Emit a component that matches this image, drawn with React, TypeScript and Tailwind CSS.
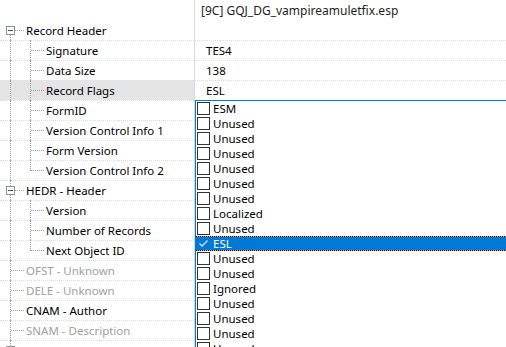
import React from "react";

type Row = {
  label?: string;
  value?: string;
  level: 0 | 1 | 2;
  gray?: boolean;
  expander?: boolean;
  first?: boolean;
  lastChild?: boolean;
  highlight?: boolean;
};

const rows: Row[] = [
  { level: 0 },
  { label: "Record Header", level: 1, expander: true, first: true },
  { label: "Signature", value: "TES4", level: 2 },
  { label: "Data Size", value: "138", level: 2 },
  { label: "Record Flags", value: "ESL", level: 2, highlight: true },
  { label: "FormID", level: 2 },
  { label: "Version Control Info 1", level: 2 },
  { label: "Form Version", level: 2 },
  { label: "Version Control Info 2", level: 2, lastChild: true },
  { label: "HEDR - Header", level: 1, expander: true },
  { label: "Version", level: 2 },
  { label: "Number of Records", level: 2 },
  { label: "Next Object ID", level: 2, lastChild: true },
  { label: "OFST - Unknown", level: 1, gray: true },
  { label: "DELE - Unknown", level: 1, gray: true },
  { label: "CNAM - Author", level: 1 },
  { label: "SNAM - Description", level: 1, gray: true },
  { label: "Master Files", level: 1, expander: true },
];

const flags = [
  "ESM",
  "Unused",
  "Unused",
  "Unused",
  "Unused",
  "Unused",
  "Unused",
  "Localized",
  "Unused",
  "ESL",
  "Unused",
  "Unused",
  "Ignored",
  "Unused",
  "Unused",
  "Unused",
  "Unused",
];

function TreeCell({ r }: { r: Row }) {
  if (r.level === 0) return <div className="w-[194px] h-full" />;
  return (
    <div
      className={`relative w-[194px] h-full ${r.highlight ? "bg-[#e5e5e5]" : ""}`}
    >
      <div
        className={`absolute left-[10px] w-0 border-l border-dotted border-[#a0a0a0] ${
          r.first ? "top-[10px] bottom-0" : "top-0 bottom-0"
        }`}
      />
      {r.level === 1 && (
        <div className="absolute left-[11px] w-[13px] top-[10px] h-0 border-t border-dotted border-[#a0a0a0]" />
      )}
      {r.level === 2 && (
        <>
          <div
            className={`absolute left-[30px] w-0 border-l border-dotted border-[#a0a0a0] top-0 ${
              r.lastChild ? "h-[11px]" : "bottom-0"
            }`}
          />
          <div className="absolute left-[31px] w-[13px] top-[10px] h-0 border-t border-dotted border-[#a0a0a0]" />
        </>
      )}
      {r.expander && (
        <div className="absolute left-[6px] top-[6px] w-[9px] h-[9px] border border-[#919191] bg-white flex items-center justify-center">
          <div className="w-[5px] h-px bg-[#2b5797]" />
        </div>
      )}
      <div
        className={`absolute top-px h-full flex items-center whitespace-nowrap ${
          r.level === 1 ? "left-[26px]" : "left-[46px]"
        } ${r.gray ? "text-[#a0a0a0]" : "text-black"}`}
      >
        {r.label}
      </div>
    </div>
  );
}

export default function App() {
  return (
    <div
      className="relative w-[506px] h-[347px] overflow-hidden bg-white text-[11.5px] leading-none"
      style={{ fontFamily: '"Segoe UI", "Noto Sans", sans-serif' }}
    >
      <div className="flex flex-col">
        {rows.map((r, i) => (
          <div key={i} className="relative flex h-[20px] shrink-0">
            {i > 0 && (
              <div className="absolute left-0 right-0 bottom-[-1px] h-0 border-t border-dotted border-[#dcdcdc]" />
            )}
            <TreeCell r={r} />
            <div className="w-0 h-full border-l border-[#dadada]" />
            <div className="flex-1 h-full pt-px flex items-center whitespace-nowrap text-black">
              {r.level === 0 ? (
                <span className="pl-[6px] text-[12px] text-[#1e1e1e]">
                  [9C] GQJ_DG_vampireamuletfix.esp
                </span>
              ) : (
                <span className="pl-[11px]">{r.value}</span>
              )}
            </div>
          </div>
        ))}
      </div>

      <div className="absolute left-[195px] top-[100px] right-0 bottom-[-40px] border-t border-l border-[#0078d7] bg-white flex flex-col">
        {flags.map((f, i) => {
          const sel = f === "ESL";
          return (
            <div
              key={i}
              className={`relative h-[15px] shrink-0 flex items-center whitespace-nowrap ${
                sel ? "bg-[#0078d7] text-white" : "text-black"
              }`}
            >
              {sel && (
                <>
                  <div className="absolute left-0 right-0 top-0 h-px bg-[repeating-linear-gradient(90deg,#000_0_1px,#f7a14a_1px_2px)]" />
                  <div className="absolute left-0 right-0 bottom-0 h-px bg-[repeating-linear-gradient(90deg,#000_0_1px,#f7a14a_1px_2px)]" />
                </>
              )}
              <div
                className={`ml-px w-[13px] h-[13px] shrink-0 flex items-center justify-center ${
                  sel ? "bg-[#0078d7]" : "border border-[#333333] bg-white"
                }`}
              >
                {sel && (
                  <svg width="11" height="11" viewBox="0 0 11 11">
                    <path
                      d="M1.5 5.5 L4 8 L9.5 2.5"
                      fill="none"
                      stroke="#cfe6fb"
                      strokeWidth="1.3"
                    />
                  </svg>
                )}
              </div>
              <span className="ml-[3px] pt-px">{f}</span>
            </div>
          );
        })}
      </div>
    </div>
  );
}
